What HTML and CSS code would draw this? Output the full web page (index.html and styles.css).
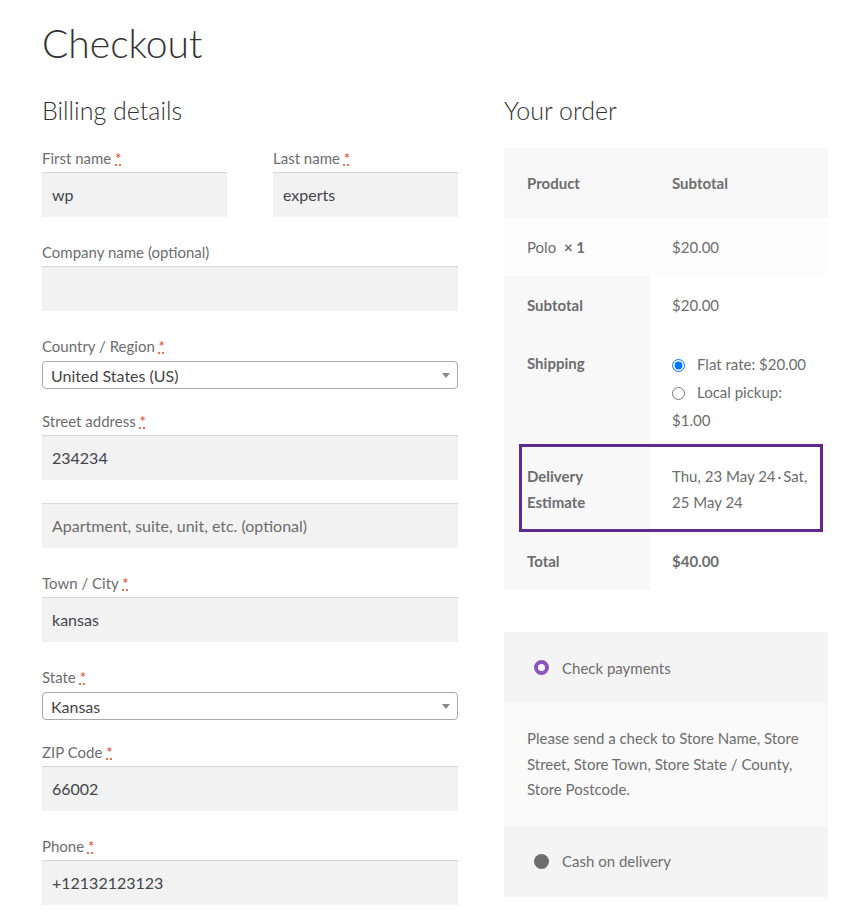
FILE: index.html
```html
<!DOCTYPE html>
<html lang="en">
<head>
    <meta charset="UTF-8">
    <meta name="viewport" content="width=device-width, initial-scale=1.0">
    <title>Checkout</title>
    <link rel="stylesheet" href="styles.css">
</head>
<body>
    <div class="page">
        <h1 class="page-title">Checkout</h1>
        <div class="checkout">
            <div class="billing">
                <h3 class="section-title">Billing details</h3>

                <div class="field-row">
                    <div class="field half">
                        <label>First name <abbr class="required" title="required">*</abbr></label>
                        <input type="text" class="input-text" value="wp">
                    </div>
                    <div class="field half">
                        <label>Last name <abbr class="required" title="required">*</abbr></label>
                        <input type="text" class="input-text" value="experts">
                    </div>
                </div>

                <div class="field">
                    <label>Company name (optional)</label>
                    <input type="text" class="input-text" value="">
                </div>

                <div class="field field-select">
                    <label>Country / Region <abbr class="required" title="required">*</abbr></label>
                    <div class="select-box">United States (US)</div>
                </div>

                <div class="field">
                    <label>Street address <abbr class="required" title="required">*</abbr></label>
                    <input type="text" class="input-text" value="234234">
                    <input type="text" class="input-text second" placeholder="Apartment, suite, unit, etc. (optional)">
                </div>

                <div class="field">
                    <label>Town / City <abbr class="required" title="required">*</abbr></label>
                    <input type="text" class="input-text" value="kansas">
                </div>

                <div class="field field-select">
                    <label>State <abbr class="required" title="required">*</abbr></label>
                    <div class="select-box">Kansas</div>
                </div>

                <div class="field">
                    <label>ZIP Code <abbr class="required" title="required">*</abbr></label>
                    <input type="text" class="input-text" value="66002">
                </div>

                <div class="field">
                    <label>Phone <abbr class="required" title="required">*</abbr></label>
                    <input type="text" class="input-text" value="+12132123123">
                </div>
            </div>

            <div class="order">
                <h3 class="section-title">Your order</h3>
                <div class="order-table-wrap">
                    <table class="order-table">
                        <colgroup>
                            <col class="col-label">
                            <col>
                        </colgroup>
                        <thead>
                            <tr class="head-row">
                                <th>Product</th>
                                <th>Subtotal</th>
                            </tr>
                        </thead>
                        <tbody>
                            <tr class="item-row">
                                <td>Polo <strong class="qty">&times;&nbsp;1</strong></td>
                                <td>$20.00</td>
                            </tr>
                        </tbody>
                        <tfoot>
                            <tr>
                                <th>Subtotal</th>
                                <td>$20.00</td>
                            </tr>
                            <tr class="shipping-row">
                                <th>Shipping</th>
                                <td>
                                    <ul class="shipping-methods">
                                        <li><input type="radio" name="ship" checked>Flat rate: $20.00</li>
                                        <li><input type="radio" name="ship">Local pickup: $1.00</li>
                                    </ul>
                                </td>
                            </tr>
                            <tr class="delivery-row">
                                <th>Delivery Estimate</th>
                                <td>Thu, 23 May 24&thinsp;&middot;&thinsp;Sat, 25 May 24</td>
                            </tr>
                            <tr>
                                <th>Total</th>
                                <td><strong>$40.00</strong></td>
                            </tr>
                        </tfoot>
                    </table>
                    <div class="highlight"></div>
                </div>

                <div class="payment">
                    <div class="method">
                        <span class="pay-radio active"></span>
                        <span>Check payments</span>
                    </div>
                    <div class="method-desc">
                        Please send a check to Store Name, Store Street, Store Town, Store State / County, Store Postcode.
                    </div>
                    <div class="method">
                        <span class="pay-radio"></span>
                        <span>Cash on delivery</span>
                    </div>
                </div>
            </div>
        </div>
    </div>
</body>
</html>
```

FILE: styles.css
```css
body {
    margin: 0;
    font-family: Lato, "Liberation Sans", sans-serif;
    color: #6d6d6d;
    background-color: #fff;
    font-size: 15px;
}
.page {
    padding: 0 24px 0 42px;
}
.page-title {
    margin: 16px 0 0;
    font-size: 39px;
    line-height: 55px;
    font-weight: 300;
    color: #333;
}
.checkout {
    display: flex;
    gap: 46px;
}
.billing {
    width: 416px;
}
.order {
    width: 324px;
}
.section-title {
    margin: 22px 0 21px;
    font-size: 25px;
    line-height: 34px;
    font-weight: 300;
    color: #333;
}

/* form fields */
.field-row {
    display: flex;
    justify-content: space-between;
}
.field {
    margin-bottom: 25px;
}
.field.half {
    width: 185px;
}
.field label {
    display: block;
    line-height: 20px;
    margin-bottom: 4px;
}
.required {
    color: #e2401c;
    text-decoration: underline dotted;
    cursor: help;
}
.input-text {
    display: block;
    box-sizing: border-box;
    width: 100%;
    height: 45px;
    padding: 0 10px;
    border: none;
    background-color: #f2f2f2;
    box-shadow: inset 0 1px 1px rgba(0, 0, 0, 0.125);
    font-family: inherit;
    font-size: 16px;
    color: #43454b;
    outline: none;
}
.input-text::placeholder {
    color: #6d6d6d;
}
.input-text.second {
    margin-top: 23px;
}
.field-select {
    margin-bottom: 22px;
}
.field-select label {
    margin-bottom: 5px;
}
.select-box {
    position: relative;
    box-sizing: border-box;
    height: 28px;
    line-height: 28px;
    padding: 0 8px;
    border: 1px solid #aaa;
    border-radius: 4px;
    font-size: 16px;
    color: #444;
}
.select-box::after {
    content: "";
    position: absolute;
    right: 7px;
    top: 11px;
    border-left: 4px solid transparent;
    border-right: 4px solid transparent;
    border-top: 5px solid #888;
}

/* order review */
.order-table-wrap {
    position: relative;
}
.order-table {
    width: 100%;
    table-layout: fixed;
    border-collapse: collapse;
    line-height: 26px;
}
.col-label {
    width: 146px;
}
.order-table th,
.order-table td {
    text-align: left;
    padding: 16px 10px 16px 23px;
    vertical-align: top;
}
.order-table td {
    padding-left: 22px;
}
.order-table th {
    font-weight: 700;
}
.head-row th {
    background-color: #f8f8f8;
    padding-top: 22px;
    padding-bottom: 22px;
}
.head-row th + th {
    padding-left: 22px;
}
.item-row td {
    background-color: #fdfdfd;
}
.item-row td:first-child {
    padding-left: 23px;
}
.qty {
    margin-left: 4px;
}
.order-table tfoot th {
    background-color: #f8f8f8;
}
.order-table tfoot td {
    background-color: #fff;
}
.shipping-row td {
    padding-bottom: 10px;
}
.shipping-methods {
    list-style: none;
    margin: 0;
    padding: 0;
    line-height: 28px;
}
.shipping-methods input {
    margin: 0 12px 0 0;
    vertical-align: -2px;
}
.delivery-row th,
.delivery-row td {
    padding-top: 19px;
    padding-bottom: 17px;
}
.highlight {
    position: absolute;
    left: 15px;
    top: 296px;
    width: 298px;
    height: 82px;
    border: 3px solid #5f2a8c;
}

/* payment */
.payment {
    margin-top: 42px;
}
.method {
    display: flex;
    align-items: center;
    height: 71px;
    padding: 0 30px;
    background-color: #f4f4f4;
    gap: 13px;
}
.pay-radio {
    width: 15px;
    height: 15px;
    border-radius: 50%;
    background-color: #6d6d6d;
    box-sizing: border-box;
}
.pay-radio.active {
    background-color: #fff;
    border: 4px solid #8c55bb;
}
.method-desc {
    background-color: #fafafa;
    padding: 23px 23px 23px 23px;
    line-height: 25.5px;
}
```
